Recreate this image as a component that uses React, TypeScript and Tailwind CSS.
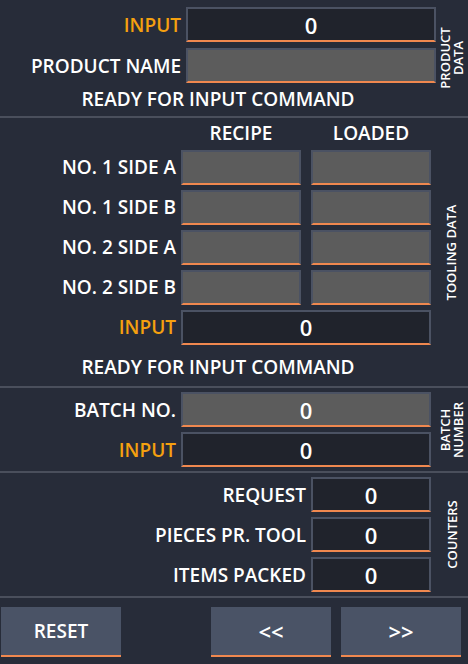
const FONT = "font-['Open_Sans','Liberation_Sans',sans-serif]";

function Field({ value, dark = false, w = 'w-[250px]' }: { value?: string; dark?: boolean; w?: string }) {
  return (
    <div
      className={`${w} h-[35px] shrink-0 border-2 border-[#4b5263] border-b-[#f0884f] flex items-center justify-center text-[22px] font-semibold text-white leading-none ${
        dark ? 'bg-[#20232c]' : 'bg-[#5c5c5c]'
      }`}
    >
      {value}
    </div>
  );
}

function Side({ lines }: { lines: string[] }) {
  return (
    <div className="w-[32px] shrink-0 flex items-center justify-center">
      <div className="-rotate-90 whitespace-nowrap text-center text-[13px] leading-[13px] font-semibold text-white">
        {lines.map((l) => (
          <div key={l}>{l}</div>
        ))}
      </div>
    </div>
  );
}

function Label({ text, orange = false }: { text: string; orange?: boolean }) {
  return (
    <div
      className={`flex-1 text-right pr-[5px] text-[19px] leading-[24px] font-semibold whitespace-nowrap ${
        orange ? 'text-[#f5a00f]' : 'text-white'
      }`}
    >
      {text}
    </div>
  );
}

const Divider = () => <div className="h-[2px] bg-[#4a4f5c]" />;

export default function App() {
  const tooling = ['NO. 1 SIDE A', 'NO. 1 SIDE B', 'NO. 2 SIDE A', 'NO. 2 SIDE B'];
  const counters = ['REQUEST', 'PIECES PR. TOOL', 'ITEMS PACKED'];

  return (
    <div className={`w-[468px] h-[664px] bg-[#272c39] text-white ${FONT} overflow-hidden`}>
      {/* product data */}
      <div className="flex h-[116px]">
        <div className="w-[436px] pt-[7px] flex flex-col">
          <div className="flex flex-col gap-[6px]">
            <div className="flex items-center">
              <Label text="INPUT" orange />
              <Field value="0" dark />
            </div>
            <div className="flex items-center">
              <Label text="PRODUCT NAME" />
              <Field />
            </div>
          </div>
          <div className="h-[32px] flex items-center justify-center text-[19px] font-semibold">
            READY FOR INPUT COMMAND
          </div>
        </div>
        <Side lines={['PRODUCT', 'DATA']} />
      </div>
      <Divider />

      {/* tooling data */}
      <div className="flex h-[268px]">
        <div className="w-[436px] pr-[5px] flex flex-col">
          <div className="flex h-[33px] items-center pl-[181px] text-[19px] font-semibold">
            <div className="w-[120px] text-center">RECIPE</div>
            <div className="w-[120px] ml-[10px] text-center">LOADED</div>
          </div>
          <div className="flex flex-col gap-[5px] mt-[1px]">
            {tooling.map((t) => (
              <div key={t} className="flex items-center">
                <Label text={t} />
                <div className="flex gap-[10px]">
                  <Field w="w-[120px]" />
                  <Field w="w-[120px]" />
                </div>
              </div>
            ))}
            <div className="flex items-center">
              <Label text="INPUT" orange />
              <Field value="0" dark />
            </div>
          </div>
          <div className="h-[44px] pt-[4px] flex items-center justify-center pl-[5px] text-[19px] font-semibold">
            READY FOR INPUT COMMAND
          </div>
        </div>
        <Side lines={['TOOLING DATA']} />
      </div>
      <Divider />

      {/* batch number */}
      <div className="flex h-[83px]">
        <div className="w-[436px] pr-[5px] pt-[4px] flex flex-col gap-[5px]">
          <div className="flex items-center">
            <Label text="BATCH NO." />
            <Field value="0" />
          </div>
          <div className="flex items-center">
            <Label text="INPUT" orange />
            <Field value="0" dark />
          </div>
        </div>
        <Side lines={['BATCH', 'NUMBER']} />
      </div>
      <Divider />

      {/* counters */}
      <div className="flex h-[123px]">
        <div className="w-[436px] pr-[5px] pt-[4px] flex flex-col gap-[5px]">
          {counters.map((c) => (
            <div key={c} className="flex items-center">
              <Label text={c} />
              <Field value="0" dark w="w-[120px]" />
            </div>
          ))}
        </div>
        <Side lines={['COUNTERS']} />
      </div>
      <Divider />

      {/* buttons */}
      <div className="flex pt-[9px] pl-[1px]">
        <button className="w-[120px] h-[50px] bg-[#4a5366] border-b-2 border-[#f0884f] text-[19px] font-semibold text-white">
          RESET
        </button>
        <button className="w-[120px] h-[50px] ml-[90px] bg-[#4a5366] border-b-2 border-[#f0884f] text-[22px] font-semibold text-white">
          &lt;&lt;
        </button>
        <button className="w-[120px] h-[50px] ml-[10px] bg-[#4a5366] border-b-2 border-[#f0884f] text-[22px] font-semibold text-white">
          &gt;&gt;
        </button>
      </div>
    </div>
  );
}
